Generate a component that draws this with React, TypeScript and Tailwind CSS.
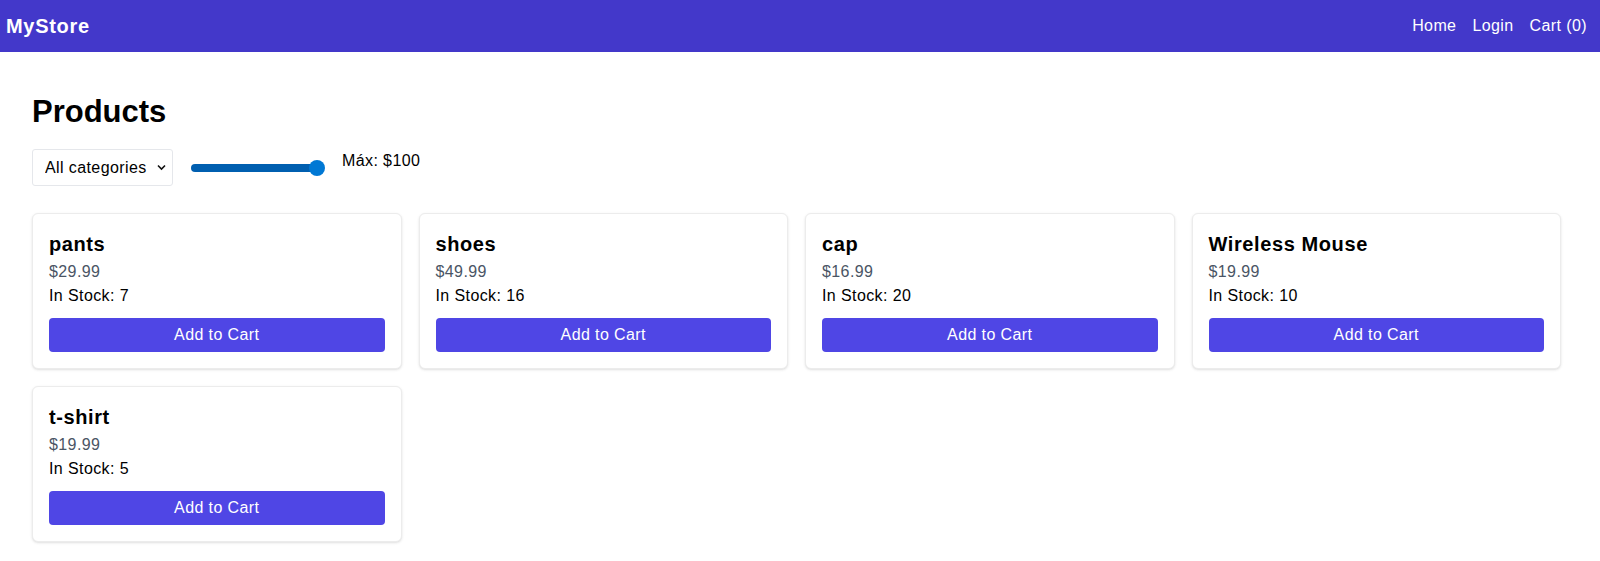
import React from "react";

const products = [
  { name: "pants", price: "$29.99", stock: 7 },
  { name: "shoes", price: "$49.99", stock: 16 },
  { name: "cap", price: "$16.99", stock: 20 },
  { name: "Wireless Mouse", price: "$19.99", stock: 10 },
  { name: "t-shirt", price: "$19.99", stock: 5 },
];

export default function App() {
  return (
    <div className="min-h-screen bg-white tracking-wide text-black" style={{ fontFamily: '"Liberation Sans", Arial, sans-serif' }}>
      <nav className="flex items-center justify-between bg-[#4338ca] pl-1.5 pr-[13px] py-3 text-white">
        <span className="text-xl font-bold leading-7 tracking-[0.035em]">MyStore</span>
        <div className="flex gap-4 text-base leading-6">
          <a href="#">Home</a>
          <a href="#">Login</a>
          <a href="#">Cart (0)</a>
        </div>
      </nav>
      <main className="pl-8 pr-[39px] pt-10 pb-8">
        <h1 className="mb-[17px] text-[31px] font-bold leading-[40px] tracking-normal">Products</h1>
        <div className="mb-[27px] flex gap-4">
          <div className="relative">
            <select className="h-[37px] w-[141px] appearance-none rounded-[3px] border border-[#e5e7eb] bg-white pl-3 pr-6 text-base leading-6 outline-none">
              <option>All categories</option>
            </select>
            <svg className="pointer-events-none absolute right-[7px] top-[15px]" width="9" height="7" viewBox="0 0 9 7" fill="none">
              <path d="M1 1.5L4.5 5L8 1.5" stroke="#111" strokeWidth="1.6" />
            </svg>
          </div>
          <div className="flex h-[37px] w-[136px] items-center pl-[2px] pr-[1px]">
            <div className="relative h-2 w-full rounded-full bg-[#005fb0]">
              <div className="absolute right-[-1px] top-[-4px] h-4 w-4 rounded-full bg-[#0078d4]" />
            </div>
          </div>
          <span className="ml-[1px] text-base leading-6">Máx: $100</span>
        </div>
        <div className="grid grid-cols-4 gap-[17px]">
          {products.map((p) => (
            <div key={p.name} className="rounded-md border border-[#ececec] bg-white p-4 shadow-sm">
              <h2 className="mb-0.5 text-xl font-bold leading-7 tracking-[0.03em]">{p.name}</h2>
              <p className="text-base leading-6 text-gray-600">{p.price}</p>
              <p className="text-base leading-6">In Stock: {p.stock}</p>
              <button className="mt-2.5 w-full rounded bg-[#4f46e5] py-[5px] text-base leading-6 text-white">
                Add to Cart
              </button>
            </div>
          ))}
        </div>
      </main>
    </div>
  );
}
